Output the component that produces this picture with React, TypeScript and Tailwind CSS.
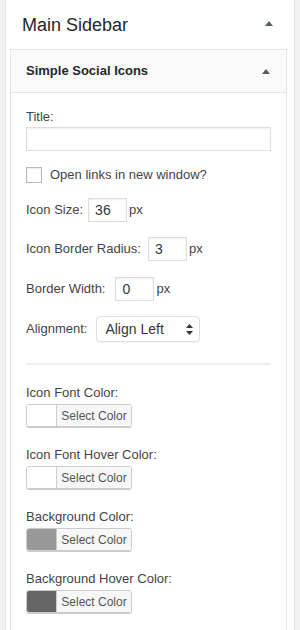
import React from 'react';

const font = { fontFamily: '"Liberation Sans", Arial, sans-serif' };

const UpArrow = ({ className }: { className?: string }) => (
  <svg width="8" height="5" viewBox="0 0 8 5" className={className}>
    <path d="M4 0 L8 5 L0 5 Z" fill="#555d66" />
  </svg>
);

const NumberRow = ({ label, value, gap }: { label: string; value: string; gap: string }) => (
  <div className="flex items-center h-[24px]">
    <span className="text-[13px] text-[#444]">{label}</span>
    <input
      readOnly
      value={value}
      className={`${gap} w-[39px] h-[24px] border border-[#ddd] shadow-[inset_0_1px_2px_rgba(0,0,0,0.07)] px-[6px] text-[14px] text-[#32373c] outline-none`}
    />
    <span className="ml-[2px] text-[13px] text-[#444]">px</span>
  </div>
);

const ColorPicker = ({ label, swatch }: { label: string; swatch: string }) => (
  <div className="mb-[19px]">
    <div className="text-[13px] leading-[18px] text-[#444]">{label}</div>
    <div className="mt-[2px] flex w-[106px] h-[23px] rounded-[3px] border border-[#ccc] shadow-[0_1px_0_#ccc] overflow-hidden">
      <div className="w-[30px] h-full border-r border-[#ccc]" style={{ backgroundColor: swatch }} />
      <div className="flex-1 bg-[#f7f7f7] flex items-center justify-center text-[12px] text-[#555]">
        Select Color
      </div>
    </div>
  </div>
);

export default function App() {
  return (
    <div className="h-[630px] overflow-hidden bg-[#f1f1f1] pl-[5px] pr-[5px]" style={font}>
      <div className="min-h-[630px] bg-white border-x border-[#e5e5e5] pl-[4px] pr-[7px]">
        <div className="h-[49px] flex items-center justify-between pl-[12px] pr-[14px]">
          <h2 className="text-[18px] text-[#23282d] pt-[1px]">Main Sidebar</h2>
          <UpArrow className="-mt-[3px]" />
        </div>
        <div className="border border-[#e5e5e5] min-h-[590px]">
          <div className="h-[43px] bg-[#fafafa] border-b border-[#e5e5e5] flex items-center justify-between pl-[15px] pr-[16px]">
            <h3 className="text-[13px] font-bold text-[#23282d]">Simple Social Icons</h3>
            <UpArrow />
          </div>
          <div className="px-[15px] pt-[15px]">
            <div className="text-[13px] leading-[18px] text-[#444]">Title:</div>
            <input
              readOnly
              className="mt-[1px] block w-[245px] h-[24px] border border-[#ddd] shadow-[inset_0_1px_2px_rgba(0,0,0,0.07)] outline-none"
            />
            <label className="mt-[16px] flex items-center h-[16px]">
              <span className="w-[16px] h-[16px] border border-[#b4b9be] bg-white shadow-[inset_0_1px_2px_rgba(0,0,0,0.1)]" />
              <span className="ml-[8px] text-[13px] text-[#444]">Open links in new window?</span>
            </label>
            <div className="mt-[15px] flex flex-col gap-[15px]">
              <NumberRow label="Icon Size:" value="36" gap="ml-[5px]" />
              <NumberRow label="Icon Border Radius:" value="3" gap="ml-[7px]" />
              <div className="pt-[1px]">
                <NumberRow label="Border Width:" value="0" gap="ml-[10px]" />
              </div>
            </div>
            <div className="mt-[15px] flex items-center h-[26px]">
              <span className="text-[13px] text-[#444]">Alignment:</span>
              <div className="ml-[9px] w-[104px] h-[26px] rounded-[4px] border border-[#ddd] shadow-[0_1px_1px_rgba(0,0,0,0.05)] flex items-center justify-between pl-[8px] pr-[6px]">
                <span className="text-[14px] text-[#32373c]">Align Left</span>
                <svg width="7" height="11" viewBox="0 0 7 11">
                  <path d="M3.5 0 L7 4 L0 4 Z M3.5 11 L7 7 L0 7 Z" fill="#32373c" />
                </svg>
              </div>
            </div>
            <div className="mt-[21px] w-[245px] border-t-2 border-[#eee]" />
            <div className="mt-[19px]">
              <ColorPicker label="Icon Font Color:" swatch="#ffffff" />
              <ColorPicker label="Icon Font Hover Color:" swatch="#ffffff" />
              <ColorPicker label="Background Color:" swatch="#999999" />
              <ColorPicker label="Background Hover Color:" swatch="#666666" />
            </div>
          </div>
        </div>
      </div>
    </div>
  );
}
